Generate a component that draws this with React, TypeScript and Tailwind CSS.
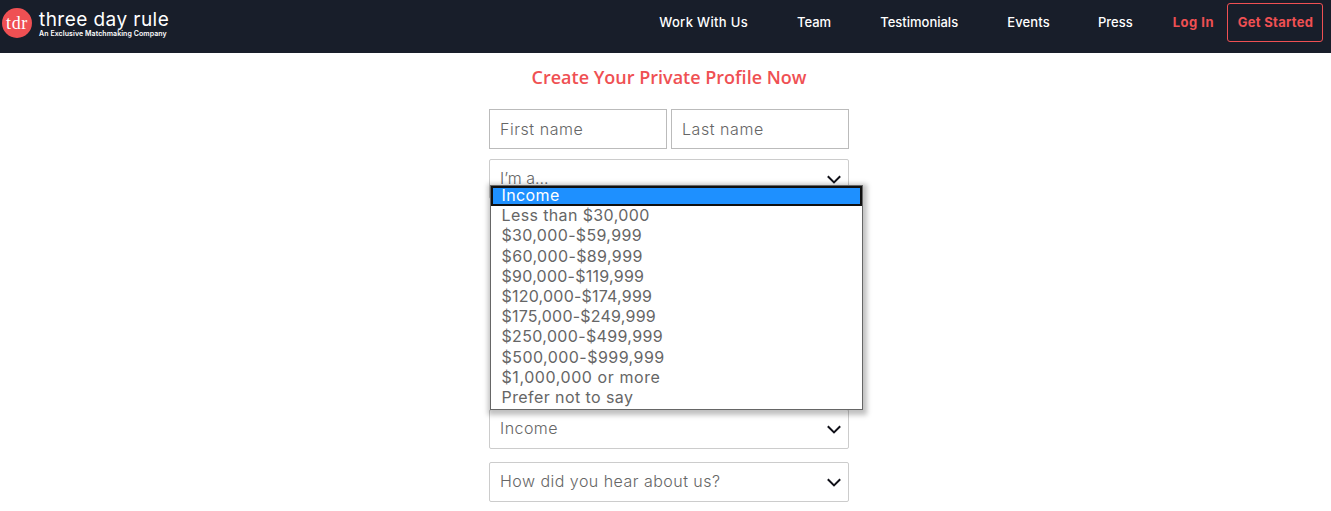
import clsx from 'clsx';

interface TextItem {
    label: string;
    className: string;
}

const links: TextItem[] = [
    { label: 'Work With Us', className: 'tracking-[0.33px]' },
    { label: 'Team', className: 'ml-[49px]' },
    { label: 'Testimonials', className: 'ml-[49px]' },
    { label: 'Events', className: 'ml-[49px] tracking-[0.15px]' },
    { label: 'Press', className: 'ml-12' },
];

const options: TextItem[] = [
    { label: 'Less than $30,000', className: 'tracking-[0.38px]' },
    { label: '$30,000-$59,999', className: 'tracking-[0.33px]' },
    { label: '$60,000-$89,999', className: 'tracking-[0.37px]' },
    { label: '$90,000-$119,999', className: 'tracking-[0.25px]' },
    { label: '$120,000-$174,999', className: 'tracking-[0.22px]' },
    { label: '$175,000-$249,999', className: 'tracking-[0.22px]' },
    { label: '$250,000-$499,999', className: 'tracking-[0.35px]' },
    { label: '$500,000-$999,999', className: 'tracking-[0.45px]' },
    { label: '$1,000,000 or more', className: 'tracking-[0.57px]' },
    { label: 'Prefer not to say', className: 'tracking-[0.42px]' },
];

function Logo() {
    return (
        <a className="flex h-[46px] items-center">
            <span className="flex size-[30px] items-center justify-center rounded-full bg-[#ef5053] font-['Liberation_Serif',serif] text-[18px] tracking-[0.7px] text-white">
                tdr
            </span>
            <span className="ml-[7px] flex flex-col whitespace-nowrap text-white">
                <span className="pt-px text-[19px] leading-[19px] tracking-[0.45px]">three day rule</span>
                <span className="text-[7px] leading-[9px] font-semibold tracking-[0.08px]">An Exclusive Matchmaking Company</span>
            </span>
        </a>
    );
}

function SelectField({ label, className }: TextItem) {
    return (
        <div className={clsx('flex h-10 items-center justify-between rounded-[2px] border border-[#ccc] pr-[7px] pl-2.5', className)}>
            <span className="pb-0.5">{label}</span>
            <svg className="mt-px h-[9px] w-[14px]" viewBox="0 0 14 9" fill="none" stroke="#101018" strokeWidth="2">
                <path d="M.8 1.2 7 7.4l6.2-6.2" />
            </svg>
        </div>
    );
}

export default function App() {
    return (
        <div className="h-[511px] overflow-hidden bg-white font-['Inter',sans-serif]">
            <header className="flex h-[53px] items-start justify-between bg-[#181e2a] pr-2 pl-0.5">
                <Logo />
                <nav className="flex h-[45px] items-center text-[13px] font-medium whitespace-nowrap text-white">
                    {links.map((link) => (
                        <a key={link.label} className={link.className}>
                            {link.label}
                        </a>
                    ))}
                    <a className="ml-10 font-bold tracking-[0.5px] text-[#ef5053]">Log In</a>
                    <a className="ml-[13px] flex h-[39px] w-24 items-center justify-center rounded-[3px] border border-[#ef5053] pl-px font-bold tracking-[0.3px] text-[#ef5053]">
                        Get Started
                    </a>
                </nav>
            </header>

            <main className="relative ml-[489px] w-[360px] text-[16px] font-light text-[#666]">
                <h1 className="flex h-14 items-center justify-center pb-[7px] font-['Open_Sans',sans-serif] text-[18px] font-semibold whitespace-nowrap text-[#ef5053]">
                    Create Your Private Profile Now
                </h1>
                <div className="flex gap-1 tracking-[0.55px]">
                    <div className="flex h-10 flex-1 items-center border border-[#bbb] px-2.5">First name</div>
                    <div className="flex h-10 flex-1 items-center border border-[#bbb] px-2.5">Last name</div>
                </div>
                <SelectField label="I’m a..." className="mt-2.5" />
                <SelectField label="Income" className="mt-[210px] tracking-[0.45px]" />
                <SelectField label="How did you hear about us?" className="mt-[13px] tracking-[0.47px]" />

                <ul className="absolute top-[132px] left-px w-[373px] border border-[#666] bg-white pb-px font-normal shadow-[1px_2px_5px_3px_rgba(0,0,0,0.25)]">
                    <li className="flex h-5 items-center border-2 border-[#101010] bg-[#1e90ff] pl-[8.5px] tracking-[0.4px] text-white">
                        <span className="pb-0.5">Income</span>
                    </li>
                    {options.map((option) => (
                        <li key={option.label} className="flex h-[20.2px] items-center pb-[1.8px] pl-[10.5px]">
                            <span className={option.className}>{option.label}</span>
                        </li>
                    ))}
                </ul>
            </main>
        </div>
    );
}
